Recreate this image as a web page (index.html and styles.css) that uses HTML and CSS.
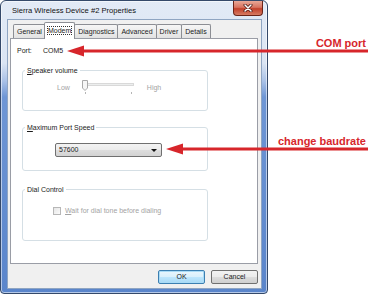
FILE: index.html
```html
<!DOCTYPE html>
<html lang="en">
<head>
    <meta charset="UTF-8">
    <title>Sierra Wireless Device #2 Properties</title>
    <link rel="stylesheet" href="styles.css">
</head>
<body>
    <div class="stage">
        <div class="window">
            <div class="titlebar">
                <span class="title">Sierra Wireless Device #2 Properties</span>
                <div class="close-btn">
                    <svg width="10" height="8" viewBox="0 0 10 8">
                        <path d="M2 1 L8 7 M8 1 L2 7" stroke="#4a1510" stroke-width="3" stroke-linecap="round"/>
                        <path d="M2 1 L8 7 M8 1 L2 7" stroke="#fff" stroke-width="1.5" stroke-linecap="round"/>
                    </svg>
                </div>
            </div>

            <div class="client">
                <div class="tabs">
                    <div class="tab">General</div>
                    <div class="tab active"><span class="focus">Modem</span></div>
                    <div class="tab">Diagnostics</div>
                    <div class="tab">Advanced</div>
                    <div class="tab">Driver</div>
                    <div class="tab">Details</div>
                </div>

                <div class="panel">
                    <div class="port-row">
                        <span class="port-label">Port:</span>
                        <span>COM5</span>
                    </div>

                    <div class="group speaker">
                        <div class="group-title"><u>S</u>peaker volume</div>
                        <div class="slider-row">
                            <span class="muted">Low</span>
                            <div class="slider">
                                <div class="track"></div>
                                <svg class="thumb" width="6" height="11" viewBox="0 0 6 11">
                                    <path d="M0.5 0.5 H5.5 V8 L3 10.5 L0.5 8 Z" fill="#f6f6f6" stroke="#a9a9a9"/>
                                </svg>
                                <i class="tick first"></i>
                                <i class="tick last"></i>
                            </div>
                            <span class="muted">High</span>
                        </div>
                    </div>

                    <div class="group speed">
                        <div class="group-title"><u>M</u>aximum Port Speed</div>
                        <div class="combo">
                            <span>57600</span>
                            <span class="combo-arrow"></span>
                        </div>
                    </div>

                    <div class="group dial">
                        <div class="group-title">Dial Control</div>
                        <div class="check-row">
                            <span class="checkbox"></span>
                            <span class="muted"><u>W</u>ait for dial tone before dialing</span>
                        </div>
                    </div>
                </div>

                <div class="buttons">
                    <div class="button default">OK</div>
                    <div class="button">Cancel</div>
                </div>
            </div>
        </div>

        <!-- callouts drawn over the screenshot -->
        <svg class="notes" width="368" height="297" viewBox="0 0 368 297">
            <g fill="#d7262b">
                <rect x="82" y="49.5" width="286" height="3"/>
                <polygon points="67,51 84,45.5 84,56.5"/>
                <rect x="181" y="147.5" width="187" height="3"/>
                <polygon points="166,149 183,143.5 183,154.5"/>
                <text class="note" x="366" y="47" text-anchor="end">COM port</text>
                <text class="note" x="366" y="145" text-anchor="end">change baudrate</text>
            </g>
        </svg>
    </div>
</body>
</html>
```

FILE: styles.css
```css
body {
    margin: 0;
    background: #fff;
    font-family: "Liberation Sans", Arial, sans-serif;
    font-size: 7px;
    color: #1b1b1b;
}

.stage {
    position: relative;
    width: 368px;
    height: 297px;
    overflow: hidden;
}

.window {
    box-sizing: border-box;
    width: 268px;
    height: 294px;
    border: 1px solid #34496a;
    border-radius: 6px 6px 4px 4px;
    padding: 0 5px 4px 6px;
    display: flex;
    flex-direction: column;
    background: linear-gradient(to bottom, #e2eaf6 0, #dbe5f3 62px, #aac2e7 80px, #6e96d5 96px, #5a85cb 100%);
    box-shadow: inset 0 0 0 1px rgba(255,255,255,0.55);
}

.titlebar {
    height: 18px;
    display: flex;
    justify-content: space-between;
    align-items: flex-start;
}

.title {
    padding-left: 5px;
    line-height: 19px;
    font-size: 7.6px;
    color: #111;
}

.close-btn {
    box-sizing: border-box;
    width: 30px;
    height: 15px;
    margin-right: -1px;
    border: 1px solid #6b2418;
    border-top: none;
    border-radius: 0 0 4px 4px;
    background: linear-gradient(to bottom, #e9a897 0, #d87461 45%, #c2402a 55%, #d67b63 100%);
    display: flex;
    align-items: center;
    justify-content: center;
}

.client {
    flex: 1;
    display: flex;
    flex-direction: column;
    background: #f0f0f0;
    border: 1px solid #8fa5c2;
    padding: 0 3px 4px 2px;
}

.tabs {
    height: 18px;
    display: flex;
    align-items: flex-end;
    padding-left: 3px;
}

.tab {
    box-sizing: border-box;
    height: 14px;
    line-height: 13px;
    padding: 0 3px;
    margin-right: -1px;
    border: 1px solid #8c8e94;
    border-bottom: none;
    border-radius: 2px 2px 0 0;
    background: linear-gradient(to bottom, #f6f6f6, #e2e2e2);
}

.tab.active {
    position: relative;
    z-index: 1;
    height: 17px;
    margin: 0 -1px -1px -1px;
    padding: 0 3px;
    background: #fff;
    line-height: 15px;
}

.focus {
    outline: 1px dotted #333;
    outline-offset: 0;
}

.panel {
    flex: 1;
    background: #fff;
    border: 1px solid #9a9da6;
    padding-left: 6px;
}

.port-row {
    display: flex;
    margin-top: 6px;
    line-height: 11px;
}

.port-label {
    width: 26px;
}

.group {
    box-sizing: border-box;
    width: 186px;
    margin-left: 5px;
    border: 1px solid #d5dfe5;
    border-radius: 3px;
}

.group-title {
    width: fit-content;
    margin: -6px 0 0 2px;
    padding: 0 2px;
    background: #fff;
    line-height: 11px;
}

.speaker {
    height: 41px;
    margin-top: 14px;
}

.speed {
    height: 44px;
    margin-top: 16px;
}

.dial {
    height: 52px;
    margin-top: 18px;
}

.muted {
    color: #a3a3a3;
}

.slider-row {
    display: flex;
    align-items: center;
    gap: 12px;
    height: 14px;
    margin-top: 4px;
    padding-left: 34px;
}

.slider {
    position: relative;
    width: 53px;
    height: 16px;
}

.track {
    position: absolute;
    top: 4px;
    left: 5px;
    right: 1px;
    height: 1px;
    border: 1px solid #d9d9d9;
    background: #eceeee;
}

.thumb {
    position: absolute;
    top: 1px;
    left: 0;
}

.tick {
    position: absolute;
    top: 13px;
    width: 1px;
    height: 2px;
    background: #b5b5b5;
}

.tick.first { left: 3px; }
.tick.last { left: 49px; }

.combo {
    box-sizing: border-box;
    width: 107px;
    height: 14px;
    margin: 10px 0 0 32px;
    padding: 0 4px 0 3px;
    border: 1px solid #707070;
    border-radius: 2px;
    background: linear-gradient(to bottom, #f3f3f3 0, #ebebeb 50%, #dddddd 51%, #d3d3d3 100%);
    display: flex;
    align-items: center;
    justify-content: space-between;
    line-height: 12px;
}

.combo-arrow {
    width: 0;
    height: 0;
    border-left: 3px solid transparent;
    border-right: 3px solid transparent;
    border-top: 3px solid #111;
}

.check-row {
    display: flex;
    align-items: center;
    gap: 4px;
    margin-top: 10px;
    padding-left: 30px;
    line-height: 11px;
}

.checkbox {
    box-sizing: border-box;
    width: 8px;
    height: 8px;
    border: 1px solid #b7b7b7;
    background: linear-gradient(135deg, #e6e6e6, #fbfbfb);
}

.buttons {
    display: flex;
    justify-content: flex-end;
    gap: 6px;
    margin-top: 6px;
}

.button {
    box-sizing: border-box;
    width: 47px;
    height: 14px;
    line-height: 12px;
    text-align: center;
    border: 1px solid #707070;
    border-radius: 2px;
    background: linear-gradient(to bottom, #f2f2f2 0, #ebebeb 50%, #dddddd 51%, #cfcfcf 100%);
}

.button.default {
    border-color: #3c7fb1;
    box-shadow: inset 0 0 0 1px #a9dbf6;
    background: linear-gradient(to bottom, #eaf6fd 0, #d9f0fc 50%, #bee6fd 51%, #a7d9f5 100%);
}

.notes {
    position: absolute;
    top: 0;
    left: 0;
    pointer-events: none;
}

.note {
    font-family: "Liberation Sans", Arial, sans-serif;
    font-weight: bold;
    font-size: 11px;
}
```
